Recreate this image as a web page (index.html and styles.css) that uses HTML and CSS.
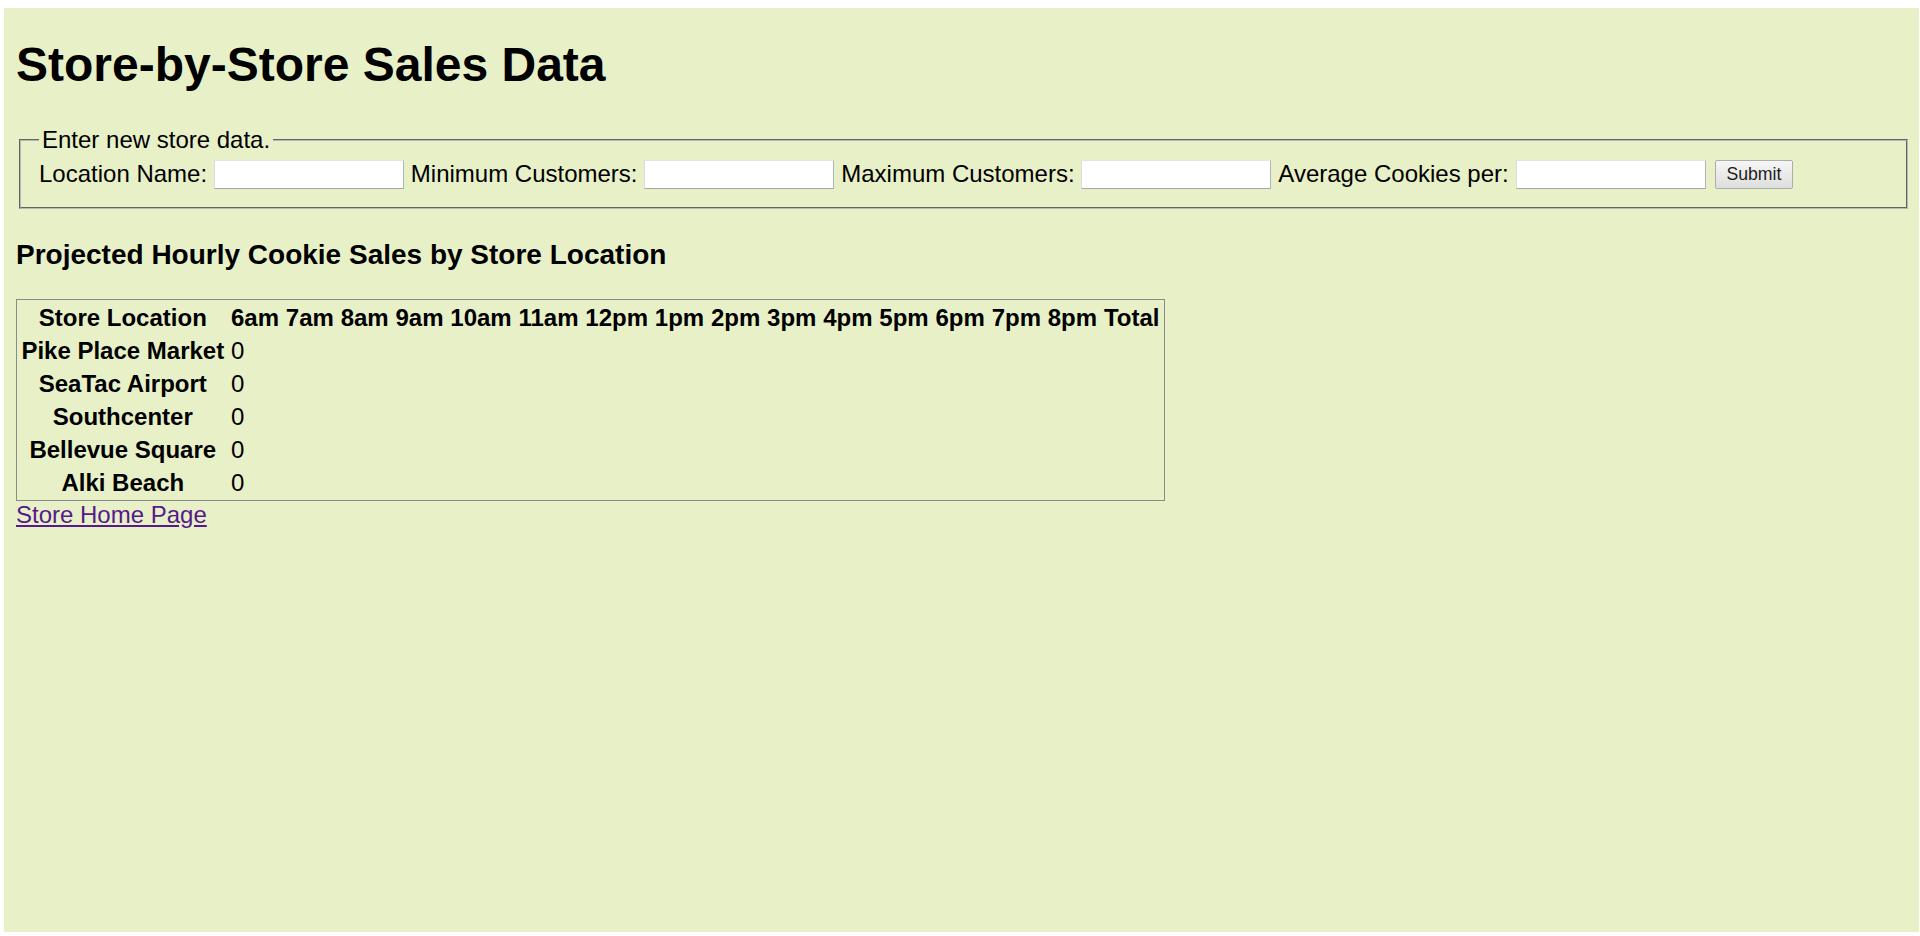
FILE: index.html
```html
<!DOCTYPE html>
<html lang="en">
<head>
<meta charset="utf-8">
<title>Store-by-Store Sales Data</title>
<link rel="stylesheet" href="styles.css">
</head>
<body>
<div class="page">
  <h1 class="title">Store-by-Store Sales Data</h1>
  <form class="store-form">
    <fieldset class="form-set">
      <legend class="form-legend">Enter new store data.</legend>
      <div class="form-row">
        <label class="field-label" for="loc">Location Name:</label>
        <input class="field-input" id="loc" type="text">
        <label class="field-label" for="min">Minimum Customers:</label>
        <input class="field-input" id="min" type="text">
        <label class="field-label" for="max">Maximum Customers:</label>
        <input class="field-input" id="max" type="text">
        <label class="field-label" for="avg">Average Cookies per:</label>
        <input class="field-input" id="avg" type="text">
        <button class="submit-btn" type="button">Submit</button>
      </div>
    </fieldset>
  </form>
  <h3 class="table-title">Projected Hourly Cookie Sales by Store Location</h3>
  <table class="sales">
    <thead>
      <tr>
        <th>Store Location</th>
        <th>6am</th><th>7am</th><th>8am</th><th>9am</th><th>10am</th><th>11am</th><th>12pm</th>
        <th>1pm</th><th>2pm</th><th>3pm</th><th>4pm</th><th>5pm</th><th>6pm</th><th>7pm</th><th>8pm</th>
        <th>Total</th>
      </tr>
    </thead>
    <tbody>
      <tr><th>Pike Place Market</th><td>0</td></tr>
      <tr><th>SeaTac Airport</th><td>0</td></tr>
      <tr><th>Southcenter</th><td>0</td></tr>
      <tr><th>Bellevue Square</th><td>0</td></tr>
      <tr><th>Alki Beach</th><td>0</td></tr>
    </tbody>
  </table>
  <a class="home-link" href="#">Store Home Page</a>
</div>
</body>
</html>
```

FILE: styles.css
```css
html, body {
  margin: 0;
  padding: 0;
  background: #ffffff;
}

body {
  font-family: "Liberation Sans", Arial, sans-serif;
  font-size: 24px;
  color: #000;
}

.page {
  display: flow-root;
  margin: 8px 1px 0 4px;
  height: 924px;
  padding: 0 8px 0 12px;
  background: #e8f0c8;
  box-sizing: border-box;
}

.title {
  font-size: 48px;
  font-weight: bold;
  line-height: normal;
  margin: 29px 0 34px 0;
}

.store-form {
  margin: 0;
}

.form-set {
  margin: 0 3px;
  padding: 4px 18px 18px 18px;
  border: 2px groove #b8b8b8;
}

.form-legend {
  padding: 0 3px;
  font-size: 24px;
  line-height: normal;
}

.form-row {
  display: flex;
  align-items: flex-start;
  gap: 6.86px;
}

.field-label {
  font-size: 24px;
  line-height: 28px;
  margin-top: 2px;
  white-space: nowrap;
}

.field-input {
  box-sizing: border-box;
  width: 190px;
  height: 28.5px;
  margin: 2px 0 0 0;
  padding: 1px 2px;
  background: #fff;
  border: 1px solid;
  border-color: #e3e3e3 #b4b4b4 #a6a6a6 #dcdcdc;
  font-family: "Liberation Sans", Arial, sans-serif;
  font-size: 18px;
}

.submit-btn {
  box-sizing: border-box;
  width: 78px;
  height: 29px;
  margin: 2px 0 0 2.5px;
  padding: 0;
  border: 1px solid #adadad;
  border-radius: 2px;
  background: linear-gradient(#f6f6f6, #dedede);
  color: #1c1c1c;
  font-family: "Liberation Sans", Arial, sans-serif;
  font-size: 17.7px;
}

.table-title {
  font-size: 28px;
  font-weight: bold;
  line-height: normal;
  margin: 30px 0 28px 0;
}

.sales {
  border: 1px solid #8a8a8a;
  border-spacing: 2.5px;
  font-size: 24px;
}

.sales th,
.sales td {
  padding: 1.5px 2.4px;
  line-height: normal;
}

.sales th {
  font-weight: bold;
  text-align: center;
}

.sales td {
  text-align: left;
}

.home-link {
  color: #551a8b;
  text-decoration: underline;
  font-size: 24px;
}
```
